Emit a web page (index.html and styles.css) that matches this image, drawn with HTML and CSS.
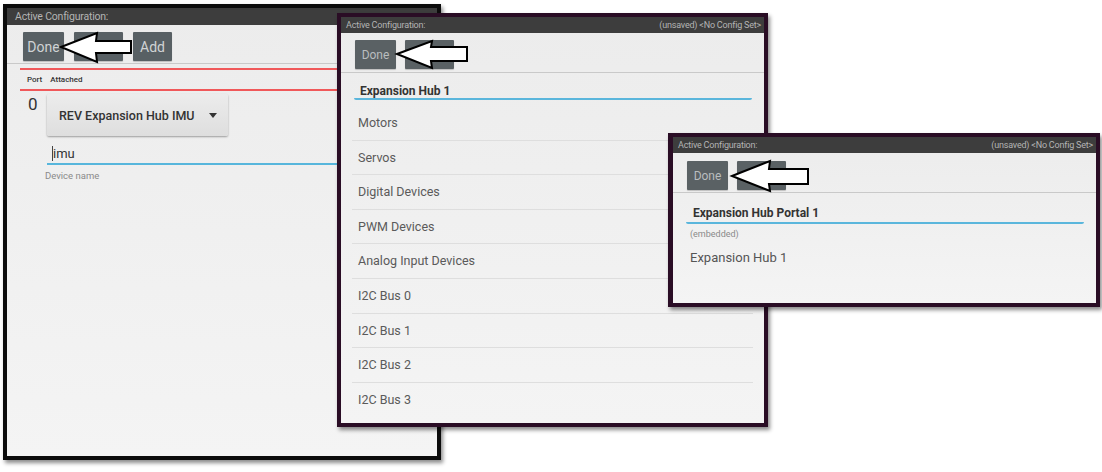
FILE: index.html
```html
<!DOCTYPE html>
<html lang="en">

<head>
  <meta charset="UTF-8">
  <meta name="viewport" content="width=device-width, initial-scale=1.0">
  <title>Active Configuration</title>
  <link rel="stylesheet" href="styles.css">
</head>

<body>

  <!-- screen 1: attached device -->
  <section class="screen screen--ports">
    <div class="screen__title">
      <span>Active Configuration:</span>
    </div>
    <div class="toolbar toolbar--large">
      <button class="toolbar__btn toolbar__btn--done" type="button">Done</button>
      <button class="toolbar__btn toolbar__btn--mid" type="button"></button>
      <button class="toolbar__btn toolbar__btn--add" type="button">Add</button>
    </div>

    <div class="ports__head">
      <span class="ports__port">Port</span>
      <span>Attached</span>
    </div>

    <div class="port">
      <div class="port__num">0</div>
      <div class="port__body">
        <div class="select">
          <span>REV Expansion Hub IMU</span>
          <span class="select__caret"></span>
        </div>
        <div class="field field--device"><span class="caret"></span>imu</div>
        <div class="field__label">Device name</div>
      </div>
    </div>

    <svg class="arrow arrow--one" width="76" height="35" viewBox="0 0 76 35">
      <polygon points="3,17 39,3 38,11 73,11 73,23 38,23 39,32" />
    </svg>
  </section>

  <!-- screen 2: hub contents -->
  <section class="screen screen--hub">
    <div class="screen__title">
      <span>Active Configuration:</span>
      <span>(unsaved) &lt;No Config Set&gt;</span>
    </div>
    <div class="toolbar">
      <button class="toolbar__btn toolbar__btn--done" type="button">Done</button>
      <button class="toolbar__btn toolbar__btn--mid" type="button"></button>
    </div>

    <div class="name-field">Expansion Hub 1</div>

    <ul class="menu">
      <li>Motors</li>
      <li>Servos</li>
      <li>Digital Devices</li>
      <li>PWM Devices</li>
      <li>Analog Input Devices</li>
      <li>I2C Bus 0</li>
      <li>I2C Bus 1</li>
      <li>I2C Bus 2</li>
      <li>I2C Bus 3</li>
    </ul>

    <svg class="arrow arrow--two" width="78" height="34" viewBox="0 0 78 34">
      <polygon points="3,16 38,3 37,9 73,9 73,23 37,23 38,30" />
    </svg>
  </section>

  <!-- screen 3: portal -->
  <section class="screen screen--portal">
    <div class="screen__title">
      <span>Active Configuration:</span>
      <span>(unsaved) &lt;No Config Set&gt;</span>
    </div>
    <div class="toolbar toolbar--portal">
      <button class="toolbar__btn toolbar__btn--done" type="button">Done</button>
      <button class="toolbar__btn toolbar__btn--mid" type="button"></button>
    </div>

    <div class="name-field name-field--portal">Expansion Hub Portal 1</div>
    <div class="portal__note">(embedded)</div>
    <div class="portal__item">Expansion Hub 1</div>

    <svg class="arrow arrow--three" width="83" height="36" viewBox="0 0 83 36">
      <polygon points="3,18 41,3 40,11 79,11 79,26 40,26 41,33" />
    </svg>
  </section>

</body>

</html>
```

FILE: styles.css
```css
*,
*:after,
*:before {
  margin: 0;
  padding: 0;
  box-sizing: border-box;
}

body {
  width: 1102px;
  height: 472px;
  position: relative;
  overflow: hidden;
  background: #fff;
  font-family: Roboto, "Liberation Sans", sans-serif;
  color: #555;
}

/* screens sit on a free canvas, so they keep their own place */
.screen {
  position: absolute;
  overflow: hidden;
  background: linear-gradient(#ececec, #f4f4f4);
  box-shadow: 2px 3px 4px rgba(0, 0, 0, 0.45);
}

.screen--ports {
  left: 3px;
  top: 4px;
  width: 438px;
  height: 456px;
  border: 4px solid #0c0c0c;
}

.screen--hub {
  left: 337px;
  top: 13px;
  width: 431px;
  height: 414px;
  border: 4px solid #2a0d25;
}

.screen--portal {
  left: 668px;
  top: 133px;
  width: 432px;
  height: 174px;
  border: 4px solid #2a0d25;
  border-left-width: 5px;
}

.screen__title {
  display: flex;
  justify-content: space-between;
  height: 16px;
  padding: 0 3px 0 5px;
  background: #3d3d3d;
  color: #b4b4b4;
  font-size: 9px;
  line-height: 16px;
  letter-spacing: -0.2px;
}

.screen--ports .screen__title {
  height: 17px;
  line-height: 17px;
  font-size: 10.5px;
  padding-left: 8px;
}

/* button row */
.toolbar {
  display: flex;
  gap: 9px;
  padding: 7px 0 3px 14px;
  border-bottom: 1px solid #c9c9c9;
}

.toolbar--large {
  gap: 10px;
  padding: 7px 0 2px 16px;
}

.toolbar--portal {
  padding: 8px 0 2px 14px;
}

.toolbar__btn {
  height: 29px;
  border: none;
  border-radius: 1px;
  background: #5a6164;
  color: #b9bdbf;
  font-family: inherit;
  font-size: 12px;
  box-shadow: 0 1px 1px rgba(0, 0, 0, 0.2);
}

.toolbar__btn--done {
  width: 41px;
}

.toolbar__btn--mid {
  width: 49px;
}

.toolbar__btn--add {
  width: 39px;
}

.toolbar--large .toolbar__btn {
  color: #d0d3d4;
  font-size: 14px;
  background: #586064;
}

/* port table */
.ports__head {
  display: flex;
  gap: 8px;
  margin: 4px 0 0 13px;
  height: 23px;
  padding-left: 7px;
  border-top: 2px solid #f0585a;
  border-bottom: 2px solid #f0585a;
  font-size: 8px;
  line-height: 19px;
  color: #333;
  font-weight: 500;
}

.port {
  display: flex;
  margin-top: 3px;
}

.port__num {
  width: 40px;
  padding-left: 21px;
  font-size: 17px;
  line-height: 20px;
  color: #333;
}

.port__body {
  flex: 1;
}

.select {
  display: flex;
  align-items: center;
  justify-content: space-between;
  width: 181px;
  height: 42px;
  padding: 0 11px 0 12px;
  background: linear-gradient(#ececec, #dedede);
  border-radius: 2px;
  box-shadow: 0 1px 2px rgba(0, 0, 0, 0.35);
  font-size: 12.5px;
  font-weight: 500;
  color: #333;
}

.select__caret {
  width: 0;
  height: 0;
  border-left: 4px solid transparent;
  border-right: 4px solid transparent;
  border-top: 5px solid #333;
}

.field--device {
  margin-top: 8px;
  height: 21px;
  padding: 1px 0 0 5px;
  line-height: 18px;
  font-size: 13px;
  color: #333;
  border-bottom: 2px solid #57b6dc;
}

.caret {
  display: inline-block;
  width: 1px;
  height: 15px;
  vertical-align: -3px;
  background: #444;
}

.field__label {
  margin: 5px 0 0 -2px;
  font-size: 9.5px;
  line-height: 12px;
  color: #8a8a8a;
}

/* hub name field */
.name-field {
  margin: 0 12px 0 13px;
  height: 27px;
  padding: 11px 0 0 6px;
  font-size: 12px;
  line-height: 14px;
  font-weight: 700;
  color: #333;
  border-bottom: 2px solid #5ab6dc;
  border-radius: 0 0 2px 2px;
}

.name-field--portal {
  height: 31px;
  padding: 13px 0 0 7px;
}

.menu {
  list-style: none;
  margin: 6px 11px 0;
}

.menu li {
  height: 34.6px;
  padding-left: 6px;
  line-height: 34px;
  font-size: 12.5px;
  color: #5a5a5a;
  border-bottom: 1px solid #dedede;
}

.menu li:last-child {
  border-bottom: none;
}

.portal__note {
  margin: 4px 0 0 17px;
  font-size: 9px;
  line-height: 12px;
  color: #8a8a8a;
}

.portal__item {
  margin: 10px 0 0 17px;
  font-size: 13px;
  line-height: 16px;
  color: #555;
}

/* callout arrows lie over the buttons */
.arrow {
  position: absolute;
}

.arrow polygon {
  fill: #fff;
  stroke: #000;
  stroke-width: 2;
  stroke-linejoin: miter;
}

.arrow--one {
  left: 51px;
  top: 22px;
}

.arrow--two {
  left: 53px;
  top: 21px;
}

.arrow--three {
  left: 56px;
  top: 21px;
}
```
